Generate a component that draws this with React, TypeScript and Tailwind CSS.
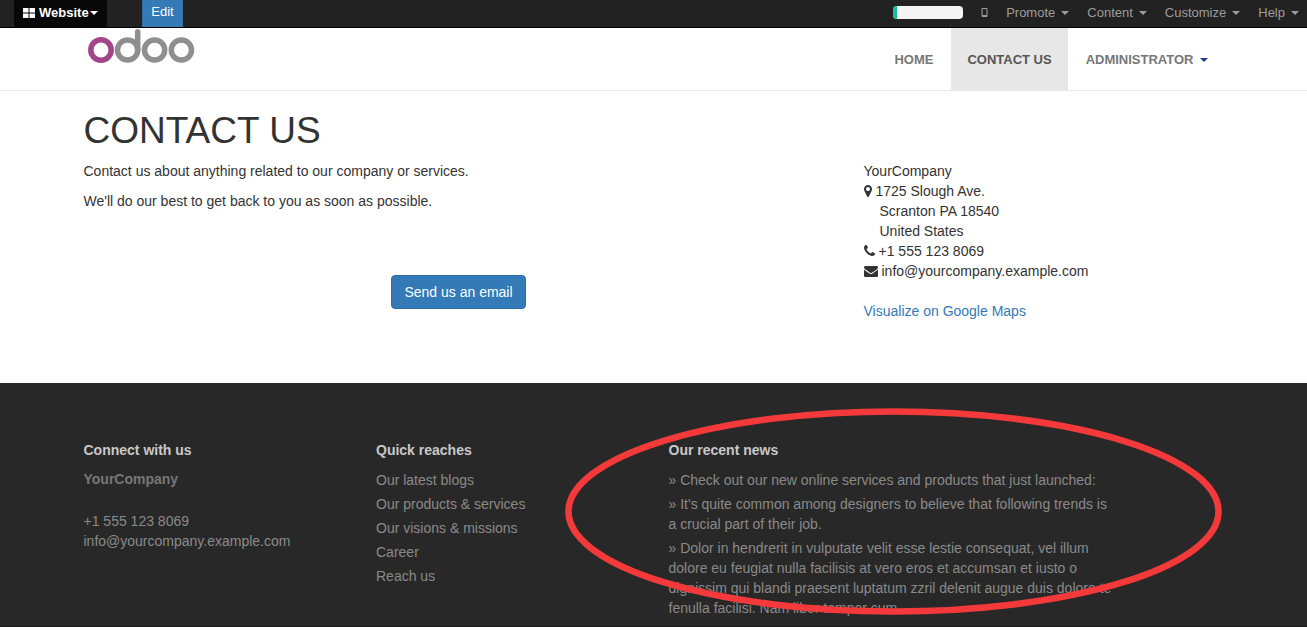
import type { ReactNode } from "react";

const MARKER =
  "M1152 640q0-106-75-181t-181-75-181 75-75 181 75 181 181 75 181-75 75-181zm256 0q0 109-33 179l-364 774q-16 33-47.5 52t-67.5 19-67.5-19-46.5-52l-365-774q-33-70-33-179 0-212 150-362t362-150 362 150 150 362z";
const PHONE =
  "M1600 1240q0 27-10 70.5t-21 68.5q-21 50-122 106-94 51-186 51-27 0-53-3.5t-57.5-12.5-47-14.5-55.5-20.5-49-18q-98-35-175-83-127-79-264-216t-216-264q-48-77-83-175-3-9-18-49t-20.5-55.5-14.5-47-12.5-57.5-3.5-53q0-92 51-186 56-101 106-122 25-11 68.5-21t70.5-10q14 0 21 3 18 6 53 76 11 19 30 54t35 63.5 31 53.5q3 4 17.5 25t21.5 35.5 7 28.5q0 20-28.5 50t-62 55-62 53-28.5 46q0 9 5 22.5t8.5 20.5 14 24 11.5 19q76 137 174 235t235 174q2 1 19 11.5t24 14 20.5 8.5 22.5 5q18 0 46-28.5t53-62 55-62 50-28.5q14 0 28.5 7t35.5 21.5 25 17.5q25 15 53.5 31t63.5 35 54 30q70 35 76 53 3 7 3 21z";
const ENVELOPE =
  "M1792 710v794q0 66-47 113t-113 47h-1472q-66 0-113-47t-47-113v-794q44 49 101 87 362 246 497 345 57 42 92.5 65.5t94.5 48 110 24.5h2q51 0 110-24.5t94.5-48 92.5-65.5q170-123 498-345 57-39 100-87zm0-294q0 79-49 151t-122 123q-376 261-468 325-10 7-42.5 31t-54 38.5-52 32.5-57.5 27-50 9h-2q-23 0-50-9t-57.5-27-52-32.5-54-38.5-42.5-31q-91-64-262-182.5t-205-142.5q-62-42-117-115.5t-55-136.5q0-78 41.5-130t118.5-52h1472q65 0 112.5 47t47.5 113z";

function Caret({ className = "" }: { className?: string }) {
  return (
    <svg viewBox="0 0 8 4" className={`h-1 w-2 shrink-0 ${className}`} fill="currentColor" aria-hidden="true">
      <path d="M0 0h8L4 4z" />
    </svg>
  );
}

function Logo() {
  return (
    <svg viewBox="0 0 112 40" className="block h-10 w-28" fill="none" strokeWidth="5.5" role="img" aria-label="Odoo">
      <circle cx="17" cy="22" r="10.2" stroke="#a24689" />
      <g stroke="#8f8f8f">
        <circle cx="43.6" cy="22" r="10.1" />
        <circle cx="70.6" cy="22" r="10.1" />
        <circle cx="97.4" cy="22" r="10.1" />
        <path d="M53.7 22V3.8" strokeLinecap="round" />
      </g>
    </svg>
  );
}

function TopBar() {
  return (
    <nav className="flex h-7 items-stretch border-b border-black bg-[#222222] text-[13px] leading-6 text-[#9d9d9d]">
      <button className="ml-3.5 flex w-[93px] items-center bg-[#080808] pb-0.5 pl-[9px] font-bold text-white">
        <svg viewBox="0 0 12 10" className="mr-1 h-2.5 w-3" fill="currentColor" aria-hidden="true">
          <path d="M0 0h5.5v4.5H0zM6.5 0H12v4.5H6.5zM0 5.5h5.5V10H0zM6.5 5.5H12V10H6.5z" />
        </svg>
        Website
        <Caret className="ml-px" />
      </button>
      <button className="ml-[35px] w-[41px] border-x border-[#2e6da4] bg-[#337ab7] pb-1 text-white">Edit</button>
      <div className="ml-auto flex items-center pr-2 pb-0.5">
        <div role="progressbar" aria-label="Setup progress" aria-valuenow={5} className="mr-[18px] h-[13px] w-[70px] overflow-hidden rounded bg-[#f5f5f5]">
          <div className="h-full w-1 bg-[#1abc9c]" />
        </div>
        <button aria-label="Mobile preview" className="mr-[18px]">
          <svg viewBox="0 0 7 9" className="h-[9px] w-[7px]" fill="none" stroke="currentColor" aria-hidden="true">
            <path d="M1 .5h5v8H1zM1 7.5h5" />
          </svg>
        </button>
        <div className="flex gap-[18px]">
          {["Promote", "Content", "Customize", "Help"].map((label) => (
            <button key={label} className="flex items-center gap-1.5">
              {label}
              <Caret />
            </button>
          ))}
        </div>
      </div>
    </nav>
  );
}

function Header() {
  return (
    <header className="border-b border-[#e7e7e7]">
      <div className="mx-auto flex max-w-[1170px] justify-between px-[15px]">
        <a href="#home">
          <Logo />
        </a>
        <nav className="flex gap-0.5 text-[13px] leading-5 font-bold text-[#777777] uppercase">
          <a href="#home" className="px-4 pt-[22px] pb-5">Home</a>
          <a href="#contact" className="bg-[#e7e7e7] px-4 pt-[22px] pb-5 text-[#555555]">Contact us</a>
          <a href="#account" className="flex items-center gap-1.5 px-4 pt-[22px] pb-5">
            Administrator
            <Caret className="text-[#1f3a93]" />
          </a>
        </nav>
      </div>
    </header>
  );
}

function ContactLine({ path, width, box, children }: { path: string; width: string; box: string; children: ReactNode }) {
  return (
    <div className="flex items-center gap-1">
      <svg viewBox={box} className={`h-3.5 ${width}`} fill="currentColor" aria-hidden="true">
        <path d={path} />
      </svg>
      {children}
    </div>
  );
}

function Contact() {
  return (
    <main className="mx-auto max-w-[1170px] px-[15px] pt-5 pb-[62px]">
      <h1 className="mb-2.5 text-[37px] leading-10 uppercase">Contact us</h1>
      <div className="grid grid-cols-3 gap-[30px]">
        <div className="col-span-2">
          <p className="mb-2.5">Contact us about anything related to our company or services.</p>
          <p className="mb-16">We'll do our best to get back to you as soon as possible.</p>
          <div className="text-center">
            <a href="mailto:info@yourcompany.example.com" className="inline-block rounded border border-[#2e6da4] bg-[#337ab7] px-3 py-1.5 text-white">
              Send us an email
            </a>
          </div>
        </div>
        <div>
          <address className="mb-5 not-italic">
            <div>YourCompany</div>
            <ContactLine path={MARKER} box="384 0 1024 1792" width="w-2">1725 Slough Ave.</ContactLine>
            <div className="pl-4">Scranton PA 18540</div>
            <div className="pl-4">United States</div>
            <ContactLine path={PHONE} box="192 0 1408 1792" width="w-[11px]">+1 555 123 8069</ContactLine>
            <ContactLine path={ENVELOPE} box="0 0 1792 1792" width="w-3.5">info@yourcompany.example.com</ContactLine>
          </address>
          <a href="#map" className="text-[#337ab7]">Visualize on Google Maps</a>
        </div>
      </div>
    </main>
  );
}

const LINKS = ["Our latest blogs", "Our products & services", "Our visions & missions", "Career", "Reach us"];
const NEWS = [
  "Check out our new online services and products that just launched:",
  "It's quite common among designers to believe that following trends is a crucial part of their job.",
  "Dolor in hendrerit in vulputate velit esse lestie consequat, vel illum dolore eu feugiat nulla facilisis at vero eros et accumsan et iusto o dignissim qui blandi praesent luptatum zzril delenit augue duis dolore te fenulla facilisi. Nam liber tempor cum.",
];

function Footer() {
  return (
    <footer className="border-b border-[#1b1b1b] bg-[#282828] pt-[57px] pb-2 text-[#8a8a8a]">
      <div className="mx-auto grid max-w-[1170px] grid-cols-12 gap-x-[30px] px-[15px]">
        <section className="col-span-3">
          <h2 className="mb-[9px] font-bold text-[#c8c8c8]">Connect with us</h2>
          <div className="mb-[22px] font-bold text-[#777777]">YourCompany</div>
          <div>+1 555 123 8069</div>
          <div>info@yourcompany.example.com</div>
        </section>
        <section className="col-span-3">
          <h2 className="mb-2.5 font-bold text-[#c8c8c8]">Quick reaches</h2>
          <ul className="space-y-1">
            {LINKS.map((link) => (
              <li key={link}>
                <a href="#quick">{link}</a>
              </li>
            ))}
          </ul>
        </section>
        <section className="relative col-span-5">
          <h2 className="mb-2.5 font-bold text-[#c8c8c8]">Our recent news</h2>
          <ul className="space-y-1 pr-3">
            {NEWS.map((item) => (
              <li key={item}>» {item}</li>
            ))}
          </ul>
          <svg viewBox="0 0 657 207" className="pointer-events-none absolute -top-8 -left-[104px] h-[207px] w-[657px] max-w-none" fill="none" aria-hidden="true">
            <ellipse cx="328.5" cy="103.5" rx="325" ry="100" stroke="#f33939" strokeWidth="6.6" />
          </svg>
        </section>
      </div>
    </footer>
  );
}

export default function App() {
  return (
    <div className="overflow-x-hidden bg-white font-['Liberation_Sans',Arial,sans-serif] text-sm leading-5 text-[#333333]">
      <TopBar />
      <Header />
      <Contact />
      <Footer />
    </div>
  );
}
